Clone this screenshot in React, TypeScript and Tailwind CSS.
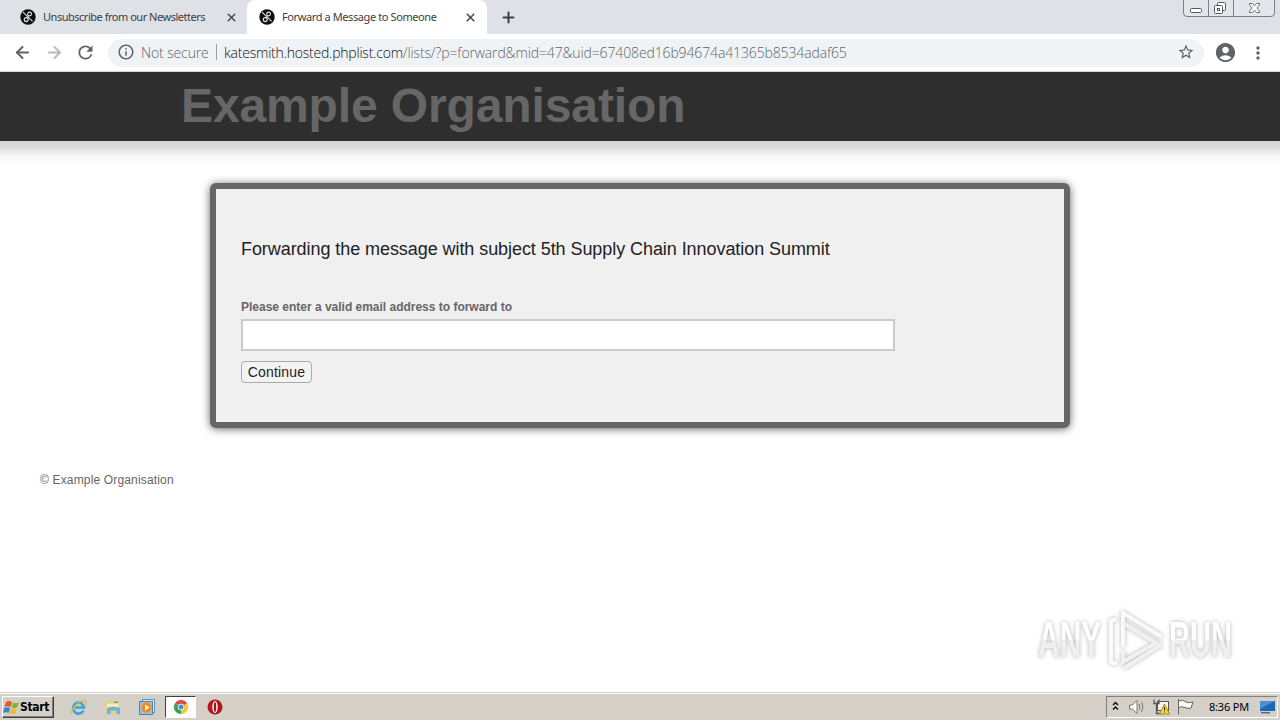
import { ReactNode } from "react";
import { ArrowLeft, ArrowRight, Plus, X } from "lucide-react";
import { MdAccountCircle, MdInfoOutline, MdMoreVert, MdRefresh, MdStarBorder } from "react-icons/md";

const Favicon = () => (
  <svg width="16" height="16" viewBox="0 0 16 16" className="shrink-0">
    <circle cx="8" cy="8" r="7.7" fill="#0c0c0c" />
    <g fill="none" stroke="#e4e4e4" strokeWidth="1.1">
      <path d="M3 3.2 L12.6 12.4" />
      <circle cx="9.6" cy="5" r="1.9" />
      <circle cx="6.2" cy="10.6" r="2" />
      <path d="M8.4 6.6 L7.2 8.8" />
    </g>
  </svg>
);

const WindowControls = () => (
  <svg width="96" height="18" viewBox="0 0 96 18" fill="none">
    <path d="M0.5 0 V13 Q0.5 16.5 4 16.5 H88 Q91.5 16.5 91.5 13 V0" fill="#e3e6eb" stroke="#7b7e87" />
    <path d="M25.5 0 V16 M50.5 0 V16" stroke="#7b7e87" />
    <rect x="7.5" y="8.5" width="11" height="4" rx="1" fill="#fff" stroke="#555964" />
    <rect x="34.5" y="2.5" width="8" height="8" rx="1" fill="#fff" stroke="#555964" />
    <rect x="31.5" y="5.5" width="8" height="8" rx="1" fill="#fff" stroke="#555964" />
    <rect x="34.5" y="8.5" width="2" height="2" stroke="#555964" />
    <path
      d="M66.5 3.5 H69.5 L71.5 5.8 L73.5 3.5 H76.5 V5 L73.8 8 L76.5 11 V12.5 H73.5 L71.5 10.2 L69.5 12.5 H66.5 V11 L69.2 8 L66.5 5 Z"
      fill="#fff"
      stroke="#6a6e78"
    />
  </svg>
);

const TabStrip = () => (
  <div className="relative flex h-[34px] bg-[#dee1e6] text-[11px] text-[#3c4043]">
    <div className="flex w-[247px] items-center pl-5">
      <Favicon />
      <span className="ml-[7px] whitespace-nowrap tracking-[-0.48px]">Unsubscribe from our Newsletters</span>
      <X size={13} strokeWidth={3} className="mr-[9px] ml-auto text-[#4b4e52]" />
    </div>
    <div className="flex w-60 items-center rounded-t-lg bg-white pl-3">
      <Favicon />
      <span className="ml-[7px] whitespace-nowrap tracking-[-0.4px]">Forward a Message to Someone</span>
      <X size={13} strokeWidth={3} className="mr-[10px] ml-auto text-[#4b4e52]" />
    </div>
    <div className="flex items-center pl-[13px]">
      <Plus size={17} strokeWidth={2.8} className="text-[#3c4043]" />
    </div>
    <div className="absolute top-0 right-[1px]">
      <WindowControls />
    </div>
  </div>
);

const Toolbar = () => (
  <div className="relative z-10 flex h-[38px] items-center border-b border-[#d4d5d6] bg-white text-[#5f6368]">
    <ArrowLeft size={19} strokeWidth={2.5} className="ml-[13px] shrink-0" />
    <ArrowRight size={19} strokeWidth={2.5} className="ml-[13px] shrink-0 text-[#b7b9bb]" />
    <MdRefresh size={21} className="ml-[11px] shrink-0" />
    <div className="ml-3 flex h-7 w-[1096px] items-center rounded-full bg-[#f0f3f5] pb-px pl-[9px] text-[14px] whitespace-nowrap">
      <MdInfoOutline size={18} className="shrink-0" />
      <span className="ml-[6px] w-[68px] font-['Open_Sans','Noto_Sans',sans-serif] font-light tracking-[-0.12px]">Not secure</span>
      <span className="mx-[7px] h-4 w-px bg-[#9aa0a6]" />
      <span className="font-['Open_Sans','Noto_Sans',sans-serif] font-light tracking-[-0.13px]">
        <span className="tracking-[-0.22px] text-[#101114]">katesmith.hosted.phplist.com</span>
        /lists/?p=forward&amp;mid=47&amp;uid=67408ed16b94674a41365b8534adaf65
      </span>
      <MdStarBorder size={18} className="mr-[9px] ml-auto shrink-0" />
    </div>
    <MdAccountCircle size={23} className="ml-[10px] shrink-0" />
    <MdMoreVert size={20} className="ml-[11px] shrink-0" />
  </div>
);

const Watermark = () => (
  <div className="absolute right-[44px] bottom-[20px] flex h-[64px] w-[198px] items-center justify-between drop-shadow-[0_0_2px_rgba(0,0,0,0.3)]">
    <div className="w-[67px]">
      <span className="block w-max origin-left scale-x-[0.6] bg-linear-to-b from-white from-50% to-[#f0f0f0] to-50% bg-clip-text text-[50px] leading-none font-bold text-transparent">
        ANY
      </span>
    </div>
    <svg width="58" height="62" viewBox="0 0 58 62" fill="none" stroke="#fafafa" strokeWidth="4" className="absolute left-[69px]">
      <path d="M16 38 V4 L55 28" />
      <path d="M16 14 L49 34 L16 53 V42" stroke="#f1f1f1" />
      <path d="M10 10 L4 12 V53 L10 55" />
      <path d="M17 59 L55 35" stroke="#f1f1f1" />
    </svg>
    <div className="w-[67px]">
      <span className="block w-max origin-left scale-x-[0.58] bg-linear-to-b from-white from-50% to-[#f0f0f0] to-50% bg-clip-text text-[50px] leading-none font-bold text-transparent">
        RUN
      </span>
    </div>
  </div>
);

const Page = () => (
  <main className="relative h-[620px] overflow-hidden bg-white font-['Liberation_Sans',Arial,sans-serif]">
    <header className="-mx-10 h-[69px] bg-[#2e2e2e] pl-[221px] shadow-[0_10px_12px_rgba(0,0,0,0.18)]">
      <h1 className="pt-[6px] text-[48px] leading-[56px] font-bold tracking-[-0.12px] text-[#666]">Example Organisation</h1>
    </header>
    <section className="mx-auto mt-[42px] h-[245px] w-[860px] rounded-md border-[6px] border-[#666] bg-[#f0f0f0] pt-[49px] pl-[25px] shadow-[0_1px_8px_rgba(0,0,0,0.6)]">
      <h3 className="text-[18px] leading-[22px] tracking-[-0.067px] text-[#222]">
        Forwarding the message with subject 5th Supply Chain Innovation Summit
      </h3>
      <label className="mt-[39px] block text-[12px] leading-4 font-bold tracking-[-0.01px] text-[#666]">
        Please enter a valid email address to forward to
      </label>
      <input className="mt-1 block h-8 w-[654px] border-2 border-[#ccc] bg-white" />
      <button className="mt-[10px] flex h-[22px] w-[71px] items-center justify-center rounded-[4px] border border-[#aaa] bg-[#f3f3f3] text-[14px] tracking-[0.2px] text-[#222]">
        Continue
      </button>
    </section>
    <footer className="mt-[44px] pl-10 text-[12px] leading-4 tracking-[0.16px] text-[#666]">© Example Organisation</footer>
    <Watermark />
  </main>
);

const TaskIcon = ({ children, active }: { children: ReactNode; active?: boolean }) => (
  <div
    className={
      active
        ? "flex h-[22px] w-[31px] items-center justify-center border border-t-[#404040] border-r-white border-b-white border-l-[#404040] bg-white"
        : "flex h-[22px] w-[31px] items-center justify-center"
    }
  >
    {children}
  </div>
);

const Taskbar = () => (
  <div className="flex h-7 items-center border-t border-[#d4d0c8] bg-[#d4d0c8] pt-px text-black shadow-[inset_0_1px_0_#fff]">
    <div className="ml-[2px] flex h-[22px] w-[52px] items-center border border-t-white border-r-[#404040] border-b-[#404040] border-l-white shadow-[inset_-1px_-1px_0_#808080]">
      <svg width="17" height="17" viewBox="0 0 17 17" className="shrink-0">
        <path d="M3 3 Q6 1 9 3 L7.5 8 Q5 6.5 1.5 8 Z" fill="#e4572c" />
        <path d="M10 3.5 Q13 5 16 3.5 L14 8.5 Q11.5 10 8.5 8.3 Z" fill="#7cb43c" />
        <path d="M1.2 9 Q4.5 7.5 7.2 9 L5.7 14 Q3 12.5 0 14 Z" fill="#3d86cf" />
        <path d="M8.2 9.5 Q11 11 13.8 9.5 L12.3 14.5 Q9.5 16 6.7 14.5 Z" fill="#f4b932" />
      </svg>
      <span className="font-['DejaVu_Sans_Condensed','DejaVu_Sans',sans-serif] text-[12px] font-bold tracking-[-0.3px]">Start</span>
    </div>
    <div className="ml-[9px] flex items-center gap-[3px]">
      <TaskIcon>
        <svg width="17" height="17" viewBox="0 0 17 17" fill="none">
          <path d="M13.5 11.5 A5.5 5.5 0 1 1 14 8.5 H5" stroke="#39a3dc" strokeWidth="2.6" />
          <path d="M1.5 15.5 Q0 13 5 7 Q12 0 15.8 2 Q16.7 3.5 14.5 6" stroke="#e3b83e" strokeWidth="1.2" />
        </svg>
      </TaskIcon>
      <TaskIcon>
        <svg width="16" height="16" viewBox="0 0 16 16">
          <path d="M1 2 H6 L7 3.5 H14.5 V14 H1 Z" fill="#e9cf77" />
          <path d="M2 4.5 H13.5 V9 H2 Z" fill="#f9edb4" />
          <path d="M9 2.5 H13 V4 H9 Z" fill="#5fa85d" />
          <path d="M2 9 Q8 6 15 9 V15 H11.5 V11.5 H5.5 V15 H2 Z" fill="#69b4dd" />
        </svg>
      </TaskIcon>
      <TaskIcon>
        <svg width="16" height="16" viewBox="0 0 16 16">
          <rect x="3.5" y="0.5" width="12" height="13" fill="#dcebf7" stroke="#5b94c4" />
          <rect x="0.5" y="2.5" width="13" height="13" fill="#9ac4e6" stroke="#4a82b4" />
          <circle cx="7.5" cy="8.5" r="5.2" fill="#f38b1c" />
          <path d="M6 5.5 L10.5 8.5 L6 11.5 Z" fill="#fff" />
        </svg>
      </TaskIcon>
      <TaskIcon active>
        <svg width="14" height="14" viewBox="0 0 14 14">
          <path d="M7 7 L0.9 3.5 A7 7 0 0 1 13.1 3.5 Z" fill="#e0493b" />
          <path d="M7 7 L13.1 3.5 A7 7 0 0 1 7 14 Z" fill="#f7c72f" />
          <path d="M7 7 L7 14 A7 7 0 0 1 0.9 3.5 Z" fill="#35a257" />
          <circle cx="7" cy="7" r="3.2" fill="#fff" />
          <circle cx="7" cy="7" r="2.5" fill="#4688ed" />
        </svg>
      </TaskIcon>
      <TaskIcon>
        <svg width="16" height="16" viewBox="0 0 16 16">
          <circle cx="8" cy="8" r="7.5" fill="#b5161c" />
          <ellipse cx="8" cy="8" rx="2.7" ry="6" fill="#fff" />
          <ellipse cx="8" cy="8" rx="1.2" ry="5" fill="#a51218" />
        </svg>
      </TaskIcon>
    </div>
    <div className="mr-[2px] ml-auto flex h-[22px] w-[172px] items-center border border-t-[#808080] border-r-white border-b-white border-l-[#808080]">
      <svg width="90" height="20" viewBox="0 0 90 20" fill="none" className="shrink-0">
        <path d="M6 8 L8.5 5.5 L11 8 M6 12.5 L8.5 10 L11 12.5" stroke="#111" strokeWidth="1.5" />
        <path d="M22.5 8 H25.5 L30 3.5 V16.5 L25.5 12 H22.5 Z" fill="#fff" stroke="#777" />
        <path d="M32 7 Q34 10 32 13 M34.5 5 Q37.5 10 34.5 15" stroke="#777" />
        <rect x="50.5" y="4.5" width="11" height="9" fill="#f4f4f4" stroke="#555" />
        <path d="M47 2.5 V6.5 H52 V2.5 M49.5 6.5 V16.5 H56" stroke="#555" strokeWidth="1.3" />
        <path d="M57.5 7 L62.5 17 H52.5 Z" fill="#ffd83b" stroke="#a88719" />
        <path d="M57.5 10 V13.5 M57.5 14.5 V15.5" stroke="#222" />
        <path d="M71.5 2 V17.5 M72 4 Q76 2 79 5 Q82 6.5 86 5 L84 11 Q81 12 78 10.5 Q75 9 72 10.5" fill="#fff" stroke="#666" />
      </svg>
      <span className="ml-3 text-[11px] tracking-[-0.2px] whitespace-nowrap">8:36 PM</span>
      <svg width="17" height="14" viewBox="0 0 17 14" className="mr-px ml-auto">
        <path d="M1 1 H16 V11 H1 Z" fill="#1d66b8" />
        <path d="M1 1 H16 L1 9 Z" fill="#4691d8" />
        <path d="M2 12 H11 V13.5 H2 Z" fill="#4c6e91" />
      </svg>
    </div>
  </div>
);

const App = () => {
  return (
    <div className="h-[720px] w-[1280px] overflow-hidden font-['Noto_Sans','Open_Sans',sans-serif]">
      <TabStrip />
      <Toolbar />
      <Page />
      <Taskbar />
    </div>
  );
};

export default App;
